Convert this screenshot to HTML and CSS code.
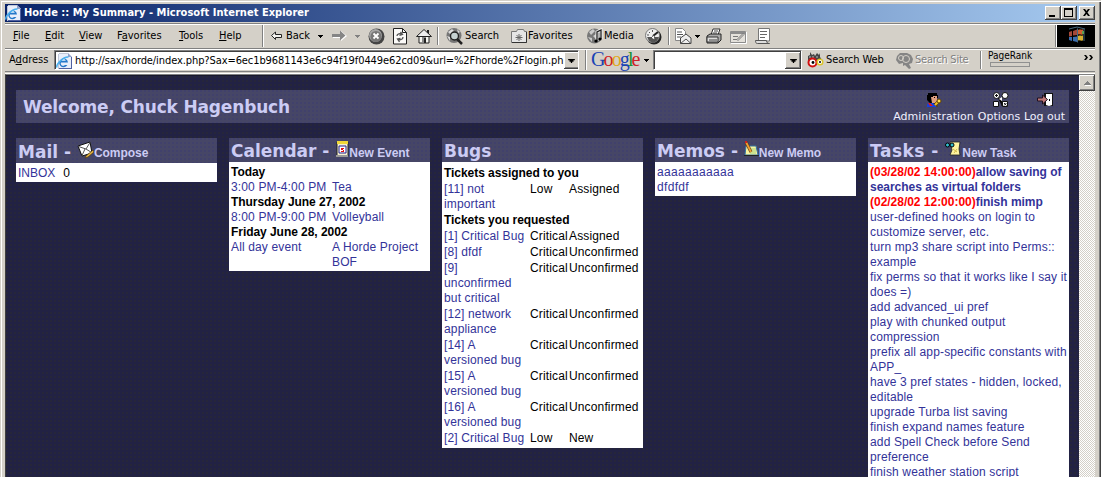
FILE: index.html
```html
<!DOCTYPE html>
<html lang="en">
<head>
<meta charset="utf-8">
<title>Horde :: My Summary</title>
<link rel="stylesheet" href="styles.css">
</head>
<body>
<svg width="0" height="0" class="defs">
  <symbol id="ie" viewBox="0 0 16 16">
    <path d="M3 0h9l4 4v12H3z" fill="#e8eefa"/><path d="M3 0h9v1H3zM2 1h1v15H2z" fill="#c0c8d8"/><path d="M15 4h1v12H3v-1h12z" fill="#5060a0"/><path d="M12 0v4h4" fill="#8fa0c8"/>
    <path d="M12 9.5A4.4 4.4 0 1 0 11.4 12H8.8A2.3 2.3 0 0 1 5 9.5z" fill="#2477c9"/><path d="M5.3 7.8h4.5A2.3 2.3 0 0 0 5.3 7.8z" fill="#e8f6ff"/>
    <path d="M1.3 14.5C-1 12 7 3.600 12.500 4" fill="none" stroke="#49b0ee" stroke-width="1.500"/>
  </symbol>
  <symbol id="caret" viewBox="0 0 5 3"><path d="M0 0h5v1H4v1H3v1H2V2H1V1H0z" fill="currentColor"/></symbol>
</svg>
<div class="window">
  <header class="titlebar">
    <svg class="i16" ><use href="#ie"/></svg>
    <h1>Horde :: My Summary - Microsoft Internet Explorer</h1>
    <div class="winbtns">
      <span class="btn"><svg width="16" height="14"><path d="M4 9h6v2H4z"/></svg></span>
      <span class="btn"><svg width="16" height="14"><path d="M3 2h9v9H3zM4 4v6h7V4z" fill-rule="evenodd"/></svg></span>
      <span class="btn close"><svg width="16" height="14"><path d="M4 3h2l1.500 2L9 3h2L8.500 6.500 11 10H9L7.500 8 6 10H4l2.500-3.500z"/></svg></span>
    </div>
  </header>

  <nav class="menubar">
    <span class="t"><u>F</u>ile</span><span class="t"><u>E</u>dit</span><span class="t"><u>V</u>iew</span><span class="t">F<u>a</u>vorites</span><span class="t"><u>T</u>ools</span><span class="t"><u>H</u>elp</span>
    <i class="sep"></i>
    <svg width="14" height="12"><path d="M1.500 5.500 5.500 2v2.500h6v3h-6V9.500z" fill="#f4f2ee" stroke="#222"/></svg>
    <span class="t">Back</span>
    <svg class="caret"><use href="#caret"/></svg>
    <svg width="15" height="12"><path d="M1 5h8V1l6 5-6 5V8H1z" fill="#fff"/><path d="M0 4h8V0.500l5.500 5-5.500 5V7H0z" fill="#858585"/></svg>
    <svg class="caret dim"><use href="#caret"/></svg>
    <svg width="17" height="17"><circle cx="8.500" cy="8.500" r="8" fill="#444"/><circle cx="7.500" cy="7.500" r="6.500" fill="#a5a5a5"/><circle cx="8" cy="8.500" r="5.500" fill="#777"/><path d="M5.500 5.500l5 5m0-5l-5 5" stroke="#fff" stroke-width="1.800"/></svg>
    <svg width="15" height="17"><path d="M.5.500h9l4 4v11.500H.5z" fill="#fbfaf8" stroke="#222"/><path d="M9.500.500v4h4" fill="none" stroke="#222"/><path d="M4 8c0-2 3-3 5-1.500M7.500 4l2 2.500-3 1M10 9c0 2.500-3 3.500-5 2M6.500 14l-2-3 3-.5" fill="none" stroke="#555" stroke-width="1.300"/></svg>
    <svg width="17" height="17"><path d="M11 2h2v4h-2z" fill="#222"/><path d="M3 8h10v7H3z" fill="#f5f5f0" stroke="#222"/><path d="M.5 8.500 8 1.500l7.500 7z" fill="#eee" stroke="#222"/><path d="M6 9h4v6H6z" fill="#888"/><path d="M8 10h2v5H8z" fill="#222"/></svg>
    <i class="sep"></i>
    <svg width="18" height="17"><circle cx="8" cy="7.500" r="7.500" fill="#777"/><path d="M2 4l4-3 2 2-4 3zM1 8l3 1v4zM11 1l3 3-2 1z" fill="#ddd"/><circle cx="8.500" cy="8" r="4" fill="#c5d1d1" stroke="#222" stroke-width="1.400"/><path d="M11 11l5 5" stroke="#222" stroke-width="2.500"/></svg>
    <span class="t">Search</span>
    <svg width="16" height="16"><path d="M.5 3.500h5l1-2h6l1 2h2v11H.5z" fill="#e5e5e5" stroke="#777"/><path d="M1 14.500h14.500V4" fill="none" stroke="#333"/><path d="M8 6v7M4.500 9.500h7M5.500 7l5 5m0-5l-5 5" stroke="#666"/></svg>
    <span class="t">Favorites</span>
    <svg width="17" height="17"><circle cx="7.500" cy="8" r="7.500" fill="#777"/><path d="M2 4l4-3 2 2-4 4zM1 9l4 1v4zM6 8l3-2v5z" fill="#ccc"/><path d="M10 13V4l4-2v9" fill="none" stroke="#eee" stroke-width="3"/><path d="M10 13V4l4-2v9" fill="none" stroke="#222" stroke-width="1.300"/><circle cx="9" cy="13" r="1.600"/><circle cx="13" cy="11" r="1.600"/></svg>
    <span class="t">Media</span>
    <svg width="17" height="17"><circle cx="9" cy="9" r="7.500" fill="#222"/><circle cx="7.500" cy="7.500" r="7" fill="#eee" stroke="#777"/><path d="M8 8l5-4" stroke="#222" stroke-width="2"/><path d="M2 9h12l-2 4-4 2-4-2z" fill="#555"/><path d="M7.500 2v2M2 7h2M4 4l1 1" stroke="#555"/><path d="M6 10l3-3 1 5z" fill="#fff" stroke="#333" stroke-width=".7"/></svg>
    <i class="sep"></i>
    <svg width="17" height="17"><path d="M.5.500h7l3 3v9H.5z" fill="#fff" stroke="#888"/><path d="M2 4h5M2 6.500h6M2 9h4" stroke="#555"/><path d="M5.500 15.500V10L11 6l5 4v5.500z" fill="#eee" stroke="#444"/><path d="M5.500 15.500L11 11l5 4.500" fill="none" stroke="#555"/></svg>
    <svg class="caret"><use href="#caret"/></svg>
    <svg width="17" height="17"><path d="M5 7l2-6h7l-2 6z" fill="#fff" stroke="#333"/><path d="M1 8l3-2h11v6l-3 3H1z" fill="#aaa" stroke="#222"/><path d="M1 9h11v5H1z" fill="#ddd" stroke="#333"/><path d="M3 12h8M8 3h4M7 5h4" stroke="#444"/></svg>
    <svg width="17" height="17"><path d="M1 15.500h15.500V4" fill="none" stroke="#fff"/><path d="M.5 3.500h15v11H.5z" fill="#e4e1db" stroke="#8c8c8c"/><path d="M1 5h14" stroke="#8c8c8c" stroke-width="2"/><path d="M3 8.500h5M3 11.500h4M7 11.500l6-6 1 1-6 6z" fill="none" stroke="#777"/></svg>
    <svg width="17" height="17"><path d="M3.500.500h11v12.500H3.500z" fill="#fff" stroke="#777"/><path d="M.5 12.500h11c0 2 1 3 3 3h-12c-1.500 0-2-1-2-3z" fill="#ddd" stroke="#555"/><path d="M5 3.500h7M5 6.500h7M5 9.500h5" stroke="#666"/></svg>
    <i class="sep tall"></i>
    <div class="throbber"><svg width="24" height="20"><path d="M8 5l4-1.500V9L8 9.500zM4 6l3-1v5l-3 .5z" fill="#a44838"/><path d="M13 4c2-1 3 0 5-.5v5c-2 .5-3-.5-5 0z" fill="#d06030"/><path d="M8 11l4-.5v5.500l-4-1zM4 11h3v4l-3-1z" fill="#3a6db0"/><path d="M13 10c2-1 3 0 5-.5v5c-2 .5-3-.5-5 0z" fill="#d8b030"/><path d="M12.500 2.500v14M19 3v12M4 3l8-2 8 2" fill="none" stroke="#48697e"/><path d="M17 5h2v3h-2z" fill="#60a050"/></svg></div>
  </nav>

  <div class="addressbar">
    <span class="t">A<u>d</u>dress</span>
    <div class="field url"><svg class="i16"><use href="#ie"/></svg><span class="t">http://sax/horde/index.php?Sax=6ec1b9681143e6c94f19f0449e62cd09&amp;url=%2Fhorde%2Flogin.ph</span><b class="drop"><svg class="caret big"><use href="#caret"/></svg></b></div>
    <i class="sep dbl"></i>
    <span class="google"><b>G</b><b>o</b><b>o</b><b>g</b><b>l</b><b>e</b></span>
    <svg class="caret"><use href="#caret"/></svg>
    <div class="field query"><span></span><b class="drop"><svg class="caret big"><use href="#caret"/></svg></b></div>
    <svg width="17" height="16"><path d="M1 8V4l2-1V0l2 3 2-1 1 2 2-3 2 2 1-2v4l2 3v3H1z" fill="#444"/><path d="M3 4v2M6 4v2M10 4v2" stroke="#bbb"/><circle cx="5.500" cy="10.500" r="4" fill="#fff" stroke="#d01010" stroke-width="2"/><circle cx="13" cy="10" r="2.800" fill="#fff" stroke="#dbc52b" stroke-width="1.500"/><circle cx="6" cy="10.500" r="1.400"/><circle cx="13" cy="10" r="1"/></svg>
    <span class="t web">Search Web</span>
    <svg width="18" height="17"><path d="M4 1h7l4 2 2 4-1 4-3 1 2 4-2 1-4-4-2 1v-3l-4 1-3-4 1-4z" fill="#858585"/><circle cx="10" cy="7" r="3.500" fill="none" stroke="#d4d0c8"/><circle cx="5" cy="6" r="2.500" fill="none" stroke="#d4d0c8"/></svg>
    <span class="t off">Search Site</span>
    <i class="sep"></i>
    <div class="rank"><span>PageRank</span><i></i></div>
    <svg width="9" height="7" class="more"><path d="M0 0h2l2 2.500L2 5H0l2-2.500zM5 0h2l2 2.500L7 5H5l2-2.500z"/></svg>
  </div>

  <div class="viewport">
    <main class="page">
      <section class="welcome">
        <h2>Welcome, Chuck Hagenbuch</h2>
        <a class="admin"><svg width="17" height="16"><path d="M3 1h9v2h1v3h-2l-1 6-5-1-3-3V3h1z"/><path d="M6 5h2V4h4v5l-2 2H7z" fill="#e0a080"/><path d="M9 5h1v1H9z"/><path d="M3 11h5l3 2v2H2v-2z" fill="#1540e0"/><path d="M3 11h2l3 3H5z" fill="#e01818"/><path d="M10 13l3-3m-2 4l1-1" stroke="#604000" stroke-width="3"/><path d="M10 13l3-3" stroke="#f0c020" stroke-width="2"/><circle cx="14" cy="9" r="2" fill="#ffe050" stroke="#604000"/></svg>Administration</a>
        <a class="opts"><svg width="16" height="16"><path d="M4.500 5L9 9v5" stroke="#111" stroke-width="1"/><circle cx="3.500" cy="3.500" r="3" fill="#fff" stroke="#111"/><path d="M2 3.500h3M3.500 2v3" stroke="#111"/><circle cx="12" cy="3.500" r="3" fill="#fff" stroke="#111"/><path d="M.5 9.500h5v5h-5zM9.500 9.500h5v5h-5z" fill="#fff" stroke="#111"/><path d="M11 11l2.500 2.500m0-2.500L11 13.500" stroke="#222"/><path d="M6 7l3-2v4z" fill="#fff"/></svg>Options</a>
        <a class="out"><svg width="16" height="16"><path d="M7 1h9v13H7z" fill="#111"/><path d="M9 2h6v11l-3 1-3-1z" fill="#fff"/><path d="M12 7h1v2h-1z"/><path d="M0.500 6h5V3l5 4.500-5 4.500V9h-5z" fill="#bd7777" stroke="#201020"/></svg>Log out</a>
      </section>
      <div class="cols">
        <section class="block mail">
          <h3><b>Mail - </b><svg width="17" height="19"><path d="M1 5L13 1l2 11-10 3z" fill="#fff" stroke="#111"/><path d="M1.500 5.500L9 8l4-6.500M5 14.500L8 8M14.500 11.500L9 8" fill="none" stroke="#555"/><path d="M16 9l1 2-6 5-3 1 1-2z" fill="#e6b640" stroke="#4e3510" stroke-width=".7"/></svg><a>Compose</a></h3>
          <div class="body"><a>INBOX</a><span>0</span></div>
        </section>
        <section class="block cal">
          <h3><b>Calendar - </b><svg width="14" height="16"><path d="M2 1h11v14H2z" fill="#f6f0d0" stroke="#222"/><path d="M2 0h11v3H2z" fill="#f0d838"/><path d="M1 14h12v2H1z" fill="#999"/><path d="M4 5h7v7H4z" fill="#fff" stroke="#202090"/><path d="M6 7h3v1H8v1h1v2H6v-1h2V9H6z" fill="#e01010"/></svg><a>New Event</a></h3>
          <div class="body">
            <strong>Today</strong>
            <a>3:00 PM-4:00 PM</a><a>Tea</a>
            <strong>Thursday June 27, 2002</strong>
            <a>8:00 PM-9:00 PM</a><a>Volleyball</a>
            <strong>Friday June 28, 2002</strong>
            <a>All day event</a><a>A Horde Project<br>BOF</a>
          </div>
        </section>
        <section class="block bugs">
          <h3><b>Bugs</b></h3>
          <div class="body">
            <strong>Tickets assigned to you</strong>
            <a>[11] not<br>important</a><span>Low</span><span>Assigned</span>
            <strong>Tickets you requested</strong>
            <a>[1] Critical Bug</a><span>Critical</span><span>Assigned</span>
            <a>[8] dfdf</a><span>Critical</span><span>Unconfirmed</span>
            <a>[9]<br>unconfirmed<br>but critical</a><span>Critical</span><span>Unconfirmed</span>
            <a>[12] network<br>appliance</a><span>Critical</span><span>Unconfirmed</span>
            <a>[14] A<br>versioned bug</a><span>Critical</span><span>Unconfirmed</span>
            <a>[15] A<br>versioned bug</a><span>Critical</span><span>Unconfirmed</span>
            <a>[16] A<br>versioned bug</a><span>Critical</span><span>Unconfirmed</span>
            <a>[2] Critical Bug</a><span>Low</span><span>New</span>
          </div>
        </section>
        <section class="block memos">
          <h3><b>Memos - </b><svg width="15" height="16"><path d="M2 5h10l2 9H1z" fill="#f8f4a0" stroke="#3575a5"/><path d="M6 8h6M6 10h6M6 12h6" stroke="#a0d080"/><path d="M0 14h15v1H0z" fill="#222"/><path d="M2 1l5 10" stroke="#5a3818" stroke-width="3"/><path d="M2 1l5 10" stroke="#f0a030" stroke-width="1.800"/><path d="M1 0h2v2H1z" fill="#d02020"/></svg><a>New Memo</a></h3>
          <div class="body"><a>aaaaaaaaaaa</a><a>dfdfdf</a></div>
        </section>
        <section class="block tasks">
          <h3><b>Tasks - </b><svg width="17" height="16"><path d="M5 1h10l-1 7 1 6H5l2-5z" fill="#fff4a0" stroke="#222" stroke-width=".8"/><path d="M8 8l4 3m0-3l-3 4" stroke="#d0b848"/><circle cx="2.500" cy="4" r="2" fill="#30c0d0" stroke="#000"/><circle cx="7" cy="4" r="2" fill="#30c0d0" stroke="#000"/></svg><a>New Task</a></h3>
          <div class="body">
            <a class="due"><em>(03/28/02 14:00:00)</em>allow saving of</a>
            <a class="due">searches as virtual folders</a>
            <a class="due"><em>(02/28/02 12:00:00)</em>finish mimp</a>
            <a>user-defined hooks on login to<br>customize server, etc.</a>
            <a>turn mp3 share script into Perms::<br>example</a>
            <a>fix perms so that it works like I say it<br>does =)</a>
            <a>add advanced_ui pref</a>
            <a>play with chunked output<br>compression</a>
            <a>prefix all app-specific constants with<br>APP_</a>
            <a>have 3 pref states - hidden, locked,<br>editable</a>
            <a>upgrade Turba list saving</a>
            <a>finish expand names feature</a>
            <a>add Spell Check before Send<br>preference</a>
            <a>finish weather station script</a>
          </div>
        </section>
      </div>
    </main>
    <aside class="scroll"><span class="btn"><svg width="7" height="5"><path d="M4 1h1v1h1v1h1v2H1V4h5z" fill="#fff"/><path d="M3 0h1v1h1v1h1v1h1v1H0V3h1V2h1V1h1z" fill="#808080"/></svg></span></aside>
  </div>
</div>
</body>
</html>
```
FILE: styles.css
```css
* { box-sizing: border-box; }
body { margin: 0; width: 1101px; height: 477px; overflow: hidden; background: #d4d0c8; }
.defs { position: absolute; }
svg { display: block; flex: none; }
i, em { font-style: normal; }

.window {
  width: 1101px; height: 500px; padding: 4px 6px 0 5px;
  background: #d4d0c8;
  box-shadow: inset 1px 1px 0 #d4d0c8, inset 2px 2px 0 #fff, inset -1px 0 0 #404040, inset -2px 0 0 #808080;
  font: 12px/14px "DejaVu Sans Condensed", "DejaVu Sans", sans-serif; color: #000;
}

.titlebar {
  height: 18px; display: flex; align-items: center;
  background: linear-gradient(90deg, #0a246a, #a6caf0);
}
.titlebar h1 {
  margin: 0 0 0 3px; flex: 1; color: #fff; white-space: nowrap;
  font: bold 11px/16px "DejaVu Sans Condensed", "DejaVu Sans", sans-serif; letter-spacing: .02px;
}
.i16 { width: 16px; height: 16px; }
.winbtns { display: flex; }
.btn {
  display: block; width: 16px; height: 14px; background: #d4d0c8;
  box-shadow: inset -1px -1px 0 #404040, inset 1px 1px 0 #fff, inset -2px -2px 0 #808080;
}
.btn.close { margin-left: 2px; }

.menubar, .addressbar { display: grid; align-items: center; justify-items: start; }
.menubar {
  height: 25px; margin-top: 1px; padding-left: 8px;
  border-top: 1px solid #808080; box-shadow: inset 0 1px 0 #fff;
  grid-template-columns: 32px 34px 38px 62px 40px 43px 8px 16px 32px 14px 23px 13px 25px 23px 21px 9px 19px 46px 17px 59px 17px 41px 23px 7px 20px 11px 24px 25px 300px 2px 38px;
  grid-template-rows: 24px;
}
.t { white-space: nowrap; font-size: 11px; line-height: 14px; }
.t u { text-decoration: underline; text-underline-offset: 1px; }
.sep { width: 2px; height: 18px; border-left: 1px solid #808080; border-right: 1px solid #fff; }
.sep.tall { height: 22px; }
.sep.dbl { height: 20px; }
.menubar .sep:first-of-type { height: 22px; }
.caret { width: 5px; height: 3px; }
.caret.dim { color: #808080; }
.caret.big { width: 7px; height: 4px; }
.throbber { width: 38px; height: 22px; background: #000; padding: 1px 0 0 8px; }

.addressbar {
  height: 24px; padding-left: 4px;
  border-top: 1px solid #808080; border-bottom: 1px solid #808080; box-shadow: inset 0 1px 0 #fff;
  grid-template-columns: 45px 531px 6px 53px 9px 154px 19px 70px 19px 65px 8px 96px 11px;
  grid-template-rows: 22px;
}
.field {
  height: 20px; background: #fff; display: flex; align-items: center; justify-content: space-between;
  border: 1px solid; border-color: #808080 #fff #fff #808080; box-shadow: inset 1px 1px 0 #404040;
  padding: 1px 0 0 1px; overflow: hidden;
}
.url { width: 525px; }
.url .t { flex: 1; margin-left: 3px; letter-spacing: -.09px; }
.query { width: 149px; }
.drop {
  width: 16px; height: 17px; flex: none; background: #d4d0c8; display: grid; place-items: center;
  box-shadow: inset -1px -1px 0 #404040, inset 1px 1px 0 #fff, inset -2px -2px 0 #808080;
}
.google { font: 20px/20px "Liberation Serif", serif; letter-spacing: -1.9px; margin-top: -2px; }
.google b { font-weight: normal; color: #1a43b5; }
.google b:nth-child(2), .google b:nth-child(6) { color: #d02028; }
.google b:nth-child(3) { color: #e0a818; }
.google b:nth-child(5) { color: #189030; }
.web { letter-spacing: -.1px; }
.off { color: #808080; text-shadow: 1px 1px 0 #fff; letter-spacing: -.25px; }
.rank { align-self: start; padding-top: 1px; font-size: 10px; line-height: 12px; }
.rank i { display: block; width: 40px; height: 5px; margin-left: 2px; border: 1px solid #909090; }
.more { align-self: start; margin-top: 6px; }

.viewport {
  margin: 2px 0 0; height: 403px; display: flex;
  border-top: 1px solid #808080; border-left: 1px solid #404040; box-shadow: 0 -1px 0 #fff;
}
.page {
  width: 1073px; padding: 14px 10px 0; overflow: hidden;
  background: #222244; border-top: 1px solid #18182c;
  background-image: radial-gradient(circle at 1px 1px, #26263a 1px, transparent 1px);
  background-size: 4px 4px;
}
.scroll { width: 16px; background: repeating-conic-gradient(#fff 0 25%, #d4d0c8 0 50%) 0 0 / 2px 2px; }
.scroll .btn { height: 16px; display: grid; place-items: center; }

.welcome, h3 {
  background: radial-gradient(circle at 1px 1px, #41416c .8px, transparent 1px) 0 0 / 4px 4px #464666;
}
.welcome {
  height: 33px; display: flex; padding: 0 3px 0 7px; color: #f0f0ff;
  font: 11px/13px "DejaVu Sans", sans-serif;
}
.welcome h2 {
  margin: 0; flex: 1; color: #ccccf4;
  font: bold 17px/35px "DejaVu Sans", sans-serif; letter-spacing: -.16px;
}
.welcome a { display: flex; flex-direction: column; align-items: center; padding-top: 2px; gap: 2px; white-space: nowrap; }
.admin { width: 81px; }
.opts { width: 42px; margin: 0 3px 0 4px; }
.opts svg { margin-left: 4px; }
.out { width: 43px; }

.cols { display: grid; grid-template-columns: repeat(5, 201px); gap: 12px; margin-top: 15px; align-items: start; }
.block { font: 12px/15px "Liberation Sans", Arial, sans-serif; }
h3 { margin: 0; height: 24px; padding-left: 2px; display: flex; color: #ccccf4; white-space: pre; }
h3 b { font: bold 17px/26px "DejaVu Sans", sans-serif; }
h3 a { font: bold 12px/30px "Liberation Sans", Arial, sans-serif; letter-spacing: -.05px; }
h3 svg { margin-top: 3px; }
.mail h3 { height: 25px; }
.mail h3 b { line-height: 28px; }
.tasks h3 b { letter-spacing: .5px; }
.body { background: #fff; padding: 3px 2px 1px; white-space: nowrap; letter-spacing: .14px; }
.body a { color: #333399; }
.mail .body { display: flex; gap: 8px; letter-spacing: 0; }
.cal .body { display: grid; grid-template-columns: 101px 1fr; }
.body strong { grid-column: 1 / -1; letter-spacing: -.05px; }
.bugs .body { display: grid; grid-template-columns: 86px 39px 1fr; row-gap: 1px; padding: 4px 0 2px 2px; }
.memos .body, .tasks .body { display: flex; flex-direction: column; }
.memos .body { letter-spacing: .33px; }
.body .due { font-weight: bold; letter-spacing: -.02px; }
.due em { color: #f00; }
```
